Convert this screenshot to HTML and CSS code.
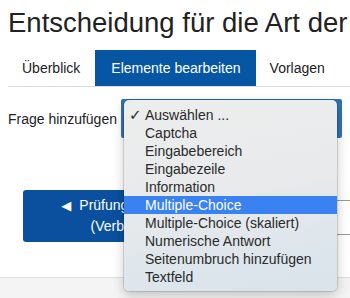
FILE: index.html
```html
<!DOCTYPE html>
<html lang="de">
<head>
  <meta charset="UTF-8">
  <meta name="viewport" content="width=device-width,initial-scale=1">
  <title>Entscheidung</title>
  <link rel="stylesheet" href="styles.css">
</head>
<body>
  <div class="page">
    <h1>Entscheidung für die Art der</h1>

    <ul class="tabs">
      <li>Überblick</li>
      <li class="active">Elemente bearbeiten</li>
      <li>Vorlagen</li>
    </ul>

    <div class="addRow">
      <label>Frage hinzufügen</label>
      <div class="selectWrap">
        <div class="selectBox"></div>
        <ul class="menu">
          <li class="checked"><span class="check">✓</span>Auswählen ...</li>
          <li>Captcha</li>
          <li>Eingabebereich</li>
          <li>Eingabezeile</li>
          <li>Information</li>
          <li class="hl">Multiple-Choice</li>
          <li>Multiple-Choice (skaliert)</li>
          <li>Numerische Antwort</li>
          <li>Seitenumbruch hinzufügen</li>
          <li>Textfeld</li>
        </ul>
      </div>
    </div>

    <div class="actionRow">
      <button class="backBtn"><span class="tri">◀</span>Prüfung fortsetzen<br>(Verbergen)</button>
      <div class="sideBox"></div>
    </div>
  </div>
  <div class="footer"></div>
</body>
</html>
```

FILE: styles.css
```css
body { margin:0; font-family:"Liberation Sans", Arial, sans-serif; color:#1d2125; background:#fff; overflow:hidden; }
.page { padding:5px 0 35px 8px; }
h1 { font-size:27.5px; font-weight:normal; line-height:35px; margin:0; white-space:nowrap; color:#222; }
.tabs { list-style:none; margin:10px 0 0; padding:0; display:flex; border-bottom:1px solid #dcdcdc; font-size:14px; white-space:nowrap; }
.tabs li { padding:0 15px 0 14px; line-height:36px; }
.tabs li.active { background:#0656a4; color:#fff; padding:0 15px 0 16px; }
.addRow { display:flex; align-items:center; margin-top:12px; font-size:14px; }
.addRow label { width:113px; }
.selectWrap { position:relative; width:221px; }
.selectBox { height:39px; background:#3272b2; border-radius:2px; }
.menu { position:absolute; left:3px; top:1px; width:213px; margin:0; padding:6px 0 5px; list-style:none; border-radius:5px;
  background:linear-gradient(170deg, #eceded 0%, #e9eaeb 45%, #dde6ec 80%, #d9e3ea 100%);
  box-shadow:0 0 0 1px rgba(0,0,0,0.12), 0 4px 12px rgba(0,0,0,0.22); z-index:5; font-size:14px; color:#2a2a2a; }
.menu li { line-height:18px; padding-left:21px; position:relative; white-space:nowrap; }
.menu li.hl { background:#3a82f2; color:#fff; }
.check { position:absolute; left:5px; top:0; font-family:"DejaVu Sans", sans-serif; font-size:15px; }
.actionRow { display:flex; align-items:flex-start; margin-top:52px; }
.backBtn { margin-left:15px; width:209px; height:52px; border:none; border-radius:3px; background:#0a509e; color:#fff;
  font-family:"Liberation Sans", Arial, sans-serif; font-size:14px; line-height:21px; padding:0; text-align:center; }
.tri { font-family:"DejaVu Sans", sans-serif; font-size:13px; margin-right:8px; }
.sideBox { margin-left:auto; margin-top:10px; width:60px; height:33px; border-top:1px solid #9a9a9a; border-bottom:1px solid #9a9a9a; }
.footer { border-top:1px solid #dedede; background:#f4f4f4; height:30px; }
```
